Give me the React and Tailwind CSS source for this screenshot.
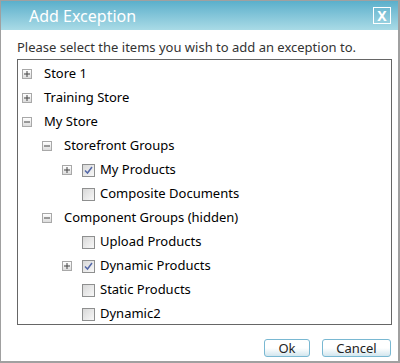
import React from 'react';

const rows = [
  { level: 0, expander: 'plus', label: 'Store 1' },
  { level: 0, expander: 'plus', label: 'Training Store' },
  { level: 0, expander: 'minus', label: 'My Store' },
  { level: 1, expander: 'minus', label: 'Storefront Groups' },
  { level: 2, expander: 'plus', check: true, label: 'My Products' },
  { level: 2, check: false, label: 'Composite Documents' },
  { level: 1, expander: 'minus', label: 'Component Groups (hidden)' },
  { level: 2, check: false, label: 'Upload Products' },
  { level: 2, expander: 'plus', check: true, label: 'Dynamic Products' },
  { level: 2, check: false, label: 'Static Products' },
  { level: 2, check: false, label: 'Dynamic2' },
];

function Expander({ type }) {
  return (
    <div className="w-[10px] h-[10px] border border-[#a8a8a8] bg-gradient-to-b from-white to-[#dcdcdc] flex items-center justify-center">
      <svg width="6" height="6" viewBox="0 0 6 6">
        <rect x="0" y="2.5" width="6" height="1" fill="#444" />
        {type === 'plus' && <rect x="2.5" y="0" width="1" height="6" fill="#444" />}
      </svg>
    </div>
  );
}

function Checkbox({ checked }) {
  return (
    <div className="w-[13px] h-[13px] border border-[#8e8f8f] bg-gradient-to-br from-[#d8d8d8] to-[#f8f8f8] flex items-center justify-center">
      {checked && (
        <svg width="9" height="9" viewBox="0 0 9 9">
          <path d="M1 4.5 L3.5 7 L8 1" stroke="#5468a8" strokeWidth="1.5" fill="none" />
        </svg>
      )}
    </div>
  );
}

function TreeRow({ row }) {
  const indent = row.level === 0 ? 'pl-[4px]' : row.level === 1 ? 'pl-[24px]' : 'pl-[44px]';
  return (
    <div className={`h-6 flex items-center ${indent}`}>
      <div className="w-[20px] flex items-center">
        {row.expander && <Expander type={row.expander} />}
      </div>
      {row.check !== undefined && (
        <div className="w-[18px] flex items-center">
          <Checkbox checked={row.check} />
        </div>
      )}
      <span className={`${row.check !== undefined ? 'ml-0' : 'ml-[2px]'} text-[13px] text-black`}>{row.label}</span>
    </div>
  );
}

export default function App() {
  return (
    <div className="w-[400px] h-[363px] bg-white font-['Noto_Sans',sans-serif] border-l border-r-2 border-b-2 border-t border-[#a0a0a0] flex flex-col">
      <div className="h-[29px] bg-gradient-to-b from-[#5aafcb] to-[#a9dbe6] flex items-center justify-between pl-[28px] pr-[7px]">
        <span className="text-white text-[16px] leading-none">Add Exception</span>
        <div className="w-[18px] h-[17px] border border-white flex items-center justify-center">
          <span className="text-white text-[14px] font-bold leading-none">X</span>
        </div>
      </div>
      <div className="pl-[16px] pr-[6px] pt-[8px] flex-1 flex flex-col">
        <div className="text-[13px] text-[#333] pb-[3px] leading-[18px]">
          Please select the items you wish to add an exception to.
        </div>
        <div className="border border-[#666] h-[266px] pt-[2px]">
          {rows.map((r, i) => (
            <TreeRow key={i} row={r} />
          ))}
        </div>
        <div className="flex justify-end gap-[12px] mt-[14px] pr-[1px]">
          <button className="w-[46px] h-[18px] rounded-[3px] border border-[#79b8d2] bg-gradient-to-b from-white via-white to-[#d2e6ee] text-[13px] text-[#222] leading-none">
            Ok
          </button>
          <button className="w-[69px] h-[18px] rounded-[3px] border border-[#79b8d2] bg-gradient-to-b from-white via-white to-[#d2e6ee] text-[13px] text-[#222] leading-none">
            Cancel
          </button>
        </div>
      </div>
    </div>
  );
}
